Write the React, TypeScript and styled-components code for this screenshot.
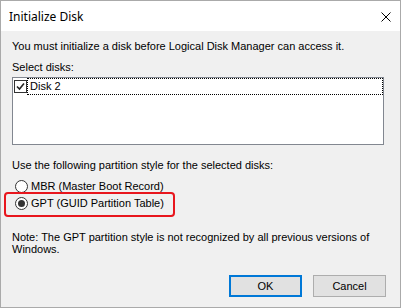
import React from "react";
import styled, { createGlobalStyle } from "styled-components";

const Global = createGlobalStyle`
  html, body { margin: 0; padding: 0; background: #ffffff; }
  * { box-sizing: border-box; }
`;

const Window = styled.div`
  width: 401px;
  height: 308px;
  border: 1px solid #aaaaaa;
  background: #f0f0f0;
  display: flex;
  flex-direction: column;
  font-family: "Liberation Sans", Arial, sans-serif;
  font-size: 11px;
  color: #000;
`;

const TitleBar = styled.div`
  height: 30px;
  background: #ffffff;
  display: flex;
  align-items: center;
  justify-content: space-between;
  padding: 0 8px 0 8px;
`;

const Title = styled.span`
  font-family: "Noto Sans", "Segoe UI", sans-serif;
  font-size: 12px;
  color: #000;
  margin-top: 1px;
`;

const CloseIcon = styled.svg`
  width: 10px;
  height: 10px;
  margin-right: 1px;
  margin-top: 2px;
`;

const Body = styled.div`
  flex: 1;
  display: flex;
  flex-direction: column;
  padding: 9px 14px 0 11px;
`;

const Text = styled.div<{ $mt?: number }>`
  line-height: 13px;
  margin-top: ${(p) => p.$mt ?? 0}px;
  white-space: nowrap;
`;

const NoteText = styled.div<{ $mt?: number }>`
  line-height: 12px;
  margin-top: ${(p) => p.$mt ?? 0}px;
`;

const ListBox = styled.div`
  margin-top: 3px;
  width: 372px;
  height: 68px;
  background: #ffffff;
  border: 1px solid #828790;
  display: flex;
  flex-direction: column;
`;

const ListRow = styled.div`
  height: 17px;
  display: flex;
  align-items: flex-start;
`;

const Check = styled.div`
  width: 13px;
  height: 13px;
  margin: 2px 0 0 1px;
  border: 1px solid #333333;
  background: #ffffff;
  display: flex;
  align-items: center;
  justify-content: center;
  flex: none;
`;

const FocusLabel = styled.div`
  flex: 1;
  height: 17px;
  border: 1px dotted #000000;
  padding-left: 2px;
  line-height: 14px;
`;

const RadioRow = styled.div<{ $highlight?: boolean }>`
  position: relative;
  height: 17px;
  display: flex;
  align-items: center;
  margin-left: 3px;
  gap: 3px;
  ${(p) =>
    p.$highlight
      ? `
    &::after {
      content: "";
      position: absolute;
      left: -11px;
      top: -3px;
      width: 167px;
      height: 21px;
      border: 2px solid #e8161d;
      border-radius: 4px;
    }
  `
      : ""}
`;

const Radio = styled.span<{ $checked?: boolean }>`
  width: 13px;
  height: 13px;
  border-radius: 50%;
  border: 1px solid #333333;
  background: #ffffff;
  display: flex;
  align-items: center;
  justify-content: center;
  flex: none;
  &::after {
    content: "";
    display: ${(p) => (p.$checked ? "block" : "none")};
    width: 7px;
    height: 7px;
    border-radius: 50%;
    background: #333333;
  }
`;

const RadioLabel = styled.span`
  line-height: 13px;
  margin-top: -1px;
  white-space: nowrap;
`;

const Buttons = styled.div`
  margin-top: 20px;
  display: flex;
  justify-content: flex-end;
  gap: 11px;
`;

const Button = styled.div<{ $default?: boolean }>`
  width: 73px;
  height: 22px;
  background: #e1e1e1;
  border: ${(p) => (p.$default ? "2px solid #0078d7" : "1px solid #adadad")};
  display: flex;
  align-items: center;
  justify-content: center;
  font-size: 11px;
`;

export default function App() {
  return (
    <>
      <Global />
      <Window>
        <TitleBar>
          <Title>Initialize Disk</Title>
          <CloseIcon viewBox="0 0 10 10">
            <path d="M0.5 0.5 L9.5 9.5 M9.5 0.5 L0.5 9.5" stroke="#000" strokeWidth="1" fill="none" />
          </CloseIcon>
        </TitleBar>
        <Body>
          <Text>You must initialize a disk before Logical Disk Manager can access it.</Text>
          <Text $mt={8}>Select disks:</Text>
          <ListBox>
            <ListRow>
              <Check>
                <svg width="9" height="9" viewBox="0 0 9 9">
                  <path d="M1 4.5 L3.5 7 L8 1.5" stroke="#222" strokeWidth="1.6" fill="none" />
                </svg>
              </Check>
              <FocusLabel>Disk 2</FocusLabel>
            </ListRow>
          </ListBox>
          <Text $mt={14}>Use the following partition style for the selected disks:</Text>
          <RadioRow style={{ marginTop: 6 }}>
            <Radio />
            <RadioLabel>MBR (Master Boot Record)</RadioLabel>
          </RadioRow>
          <RadioRow $highlight>
            <Radio $checked />
            <RadioLabel>GPT (GUID Partition Table)</RadioLabel>
          </RadioRow>
          <NoteText $mt={19}>
            Note: The GPT partition style is not recognized by all previous versions of Windows.
          </NoteText>
          <Buttons>
            <Button $default>OK</Button>
            <Button>Cancel</Button>
          </Buttons>
        </Body>
      </Window>
    </>
  );
}
